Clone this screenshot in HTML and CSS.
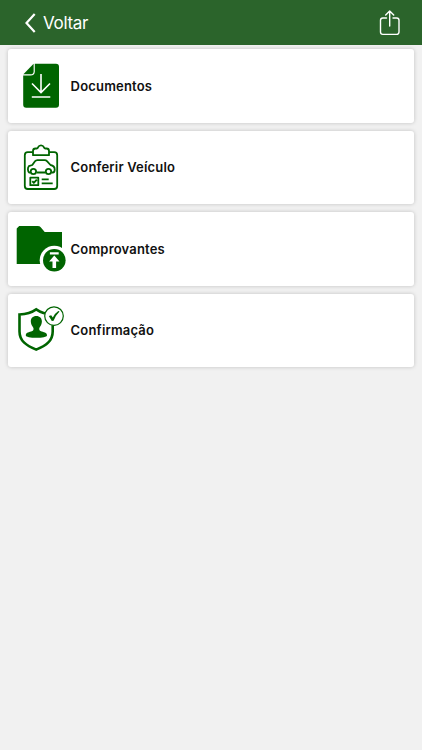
FILE: index.html
```html
<!DOCTYPE html>
<html lang="pt-BR">
<head>
    <meta charset="utf-8">
    <meta name="viewport" content="width=device-width, initial-scale=1">
    <title>Voltar</title>
    <link rel="stylesheet" href="styles.css">
</head>
<body>
    <header class="navbar">
        <a class="back" href="#">
            <svg class="back-icon" viewBox="0 0 12 20" fill="none" stroke="currentColor" stroke-width="2.2">
                <path d="M10.7 1L2.500 10l8.200 9"/>
            </svg>
            <span>Voltar</span>
        </a>
        <svg class="share-icon" viewBox="0 0 22 26" fill="none" stroke="currentColor" stroke-width="1.4" stroke-linecap="round" stroke-linejoin="round">
            <path d="M7.5 8H3.800A2.300 2.300 0 001.500 10.300v11.800A2.300 2.300 0 003.800 24.400h13.900a2.300 2.300 0 002.300-2.300V10.300A2.300 2.300 0 0017.700 8h-3.700M10.700 16V1M6.700 4.900l4-4 4 4"/>
        </svg>
    </header>
    <main class="menu">
        <a class="card" href="#">
            <svg class="card-icon" viewBox="0 0 62 74">
                <path fill="currentColor" d="M26 14.700h22a3 3 0 013 3v38a3 3 0 01-3 3H18.200a3 3 0 01-3-3V25.500z"/>
                <path fill="#fff" d="M14.500 26.500h8q4.300 0 4.300-4.300v-8.200h-12.300z"/>
                <path fill="currentColor" d="M15.400 25.200l10.200-10.500v7.700q0 2.800-2.800 2.800z"/>
                <path fill="none" stroke="#fff" stroke-width="1.600" d="M33 25v18.500M24 34.500l9 9 9-9M23.800 48h18.500"/>
            </svg>
            <span class="card-label">Documentos</span>
        </a>
        <a class="card" href="#">
            <svg class="card-icon" viewBox="0 -0.5 62 74" fill="none" stroke="currentColor" stroke-width="1.800" stroke-linejoin="round">
                <path d="M24.800 21.700h-5a3 3 0 00-3 3V55.500a3 3 0 003 3h26.400a3 3 0 003-3V24.700a3 3 0 00-3-3h-5"/>
                <path d="M25 24.700v-4.200q0-2.500 2.500-2.500h1.300c.8 0 .9-.4 1.200-1.100 1.200-2.700 4.800-2.700 6 0 .3.700.4 1.100 1.200 1.100h1.300q2.500 0 2.500 2.500v4.200z"/>
                <path d="M22.300 42h-1.100c-1.600-1.200-1.700-4.700-.4-6.300l3.500-1.200 2.700-3.700q.9-1.200 2.400-1.200h7.200q1.500 0 2.600 1.200l3.300 3.700c3.200.5 4.200 2 4.200 4.500 0 2-.7 3-1.900 3h-1.300M28.700 42h8.600"/>
                <circle cx="25.400" cy="41" r="2.700"/>
                <circle cx="40.500" cy="41" r="2.700"/>
                <path d="M22.300 47.200h8v7.500h-8zM24.300 50.700l1.500 1.700 3-3.200M33.700 48.800h7M33.700 52.900h11"/>
            </svg>
            <span class="card-label">Conferir Veículo</span>
        </a>
        <a class="card" href="#">
            <svg class="card-icon" viewBox="0 0 62 74">
                <path fill="currentColor" d="M8.700 52V16.500l2.500-2.500h18.500q2 0 3 1.300l4 4.700h17.300v32z"/>
                <circle cx="46.300" cy="48.300" r="14.600" fill="#fff"/>
                <circle cx="46.300" cy="48.300" r="11.300" fill="currentColor"/>
                <path fill="#fff" d="M41.900 40.300h8.800v2.300h-8.800zM46.300 43.500l5.200 6h-3.400v6.500h-3.600v-6.500h-3.400z"/>
            </svg>
            <span class="card-label">Comprovantes</span>
        </a>
        <a class="card" href="#">
            <svg class="card-icon" viewBox="0 -0.2 62 74">
                <path fill="none" stroke="currentColor" stroke-width="2.600" d="M28.200 16.200q-6.500 4.600-16.700 5.100v16.900c0 9.700 7 14.300 16.700 18.200 9.700-3.900 16.500-8.500 16.500-18.200V21.300q-10-.5-16.500-5.100z"/>
                <path fill="currentColor" d="M28.300 22.900c3.500 0 5.600 2.300 5.600 5.500 0 2.700-1.300 4.500-2.300 6-.7 1.300-.4 3 .9 3.500 3.200 1.200 6.500 1.500 6.500 4.300 0 1.400-4.900 2.400-10.700 2.400s-10.500-1-10.500-2.400c0-2.800 3.300-3.100 6.500-4.300 1.300-.5 1.600-2.200.9-3.500-1-1.500-2.400-3.300-2.400-6 0-3.200 2-5.500 5.500-5.500z"/>
                <circle cx="46" cy="22.900" r="9.300" fill="#fff" stroke="currentColor" stroke-width="1.200"/>
                <path fill="currentColor" d="M40.800 22.900l2.400-.8 1.600 2.200q2-4.200 5.500-6.500l1.200.6q-3.600 3.600-5.900 9.100l-1.800.3z"/>
            </svg>
            <span class="card-label">Confirmação</span>
        </a>
    </main>
</body>
</html>
```

FILE: styles.css
```css
* {
    box-sizing: border-box;
}
body {
    margin: 0;
    min-height: 100vh;
    background-color: #f1f1f1;
    font-family: Inter, -apple-system, sans-serif;
}
a {
    color: inherit;
    text-decoration: none;
}
.navbar {
    display: flex;
    align-items: center;
    justify-content: space-between;
    height: 45px;
    padding: 0 21px 0 24px;
    background-color: #2b642b;
    color: #fff;
}
.back {
    display: flex;
    align-items: center;
    gap: 7px;
    font-size: 17px;
    line-height: 22px;
    letter-spacing: -0.3px;
}
.back-icon {
    width: 12px;
    height: 20px;
}
.share-icon {
    width: 22px;
    height: 26px;
}
.menu {
    display: flex;
    flex-direction: column;
    gap: 8px;
    padding: 4px 8.4px;
}
.card {
    display: flex;
    align-items: center;
    height: 73.5px;
    background-color: #fff;
    border-radius: 3px;
    box-shadow: 0 0 4px rgba(0, 0, 0, 0.2);
}
.card-icon {
    width: 62px;
    height: 74px;
    margin-left: -0.4px;
    color: #006400;
}
.card-label {
    margin-left: 0.6px;
    font-size: 13px;
    font-weight: 600;
    letter-spacing: 0.18px;
    color: #111;
}
```
